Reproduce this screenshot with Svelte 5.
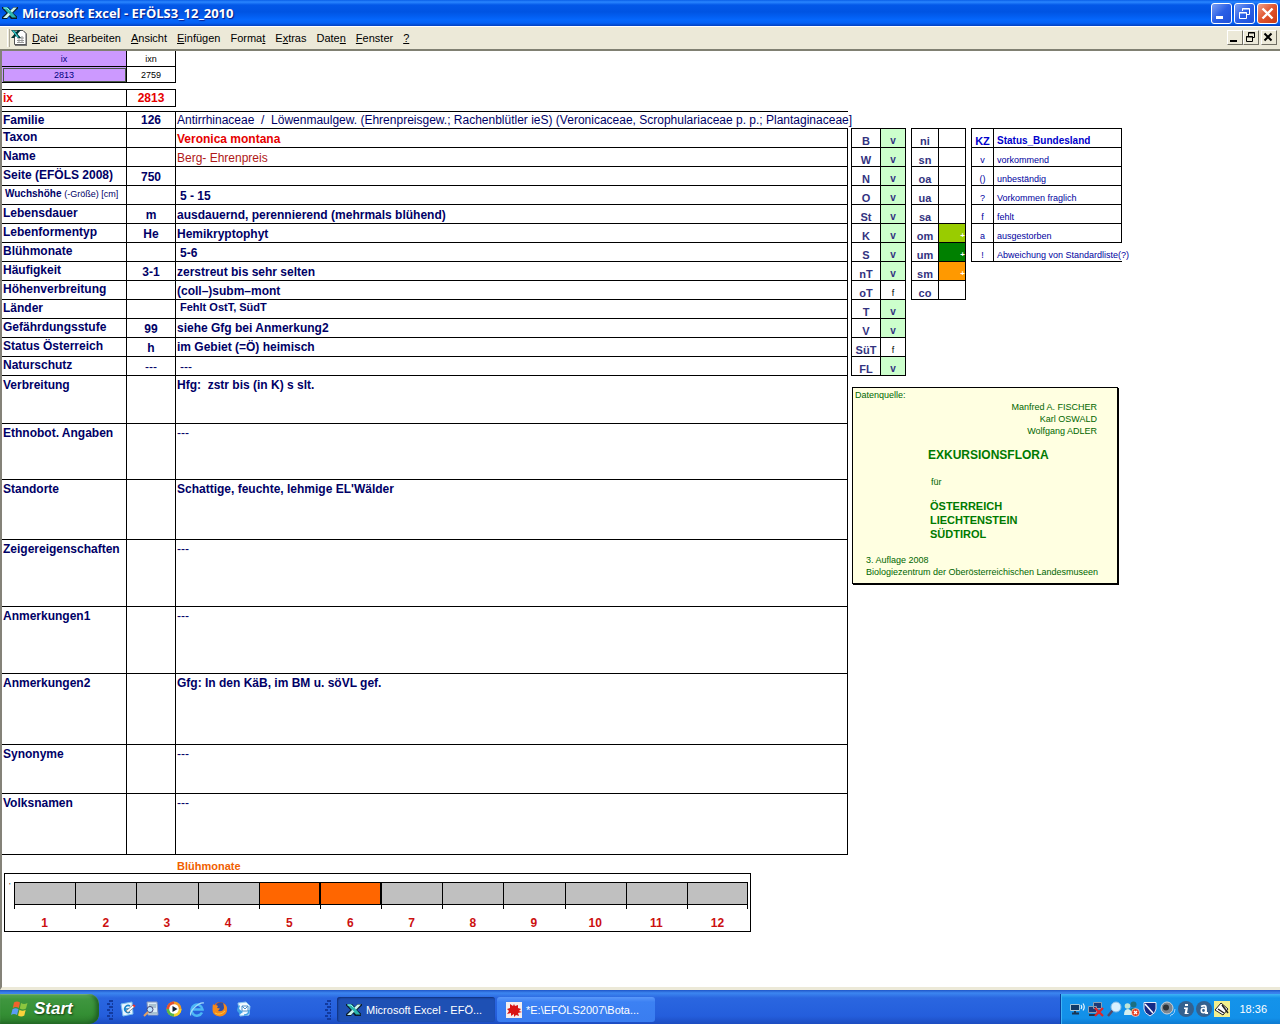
<script>
  const menu = [
    ['', 'D', 'atei'],
    ['', 'B', 'earbeiten'],
    ['', 'A', 'nsicht'],
    ['', 'E', 'infügen'],
    ['Forma', 't', ''],
    ['E', 'x', 'tras'],
    ['Date', 'n', ''],
    ['', 'F', 'enster'],
    ['', '?', '']
  ];

  const shortRows = [
    { label: 'Taxon', code: '', value: 'Veronica montana', kind: 'red' },
    { label: 'Name', code: '', value: 'Berg- Ehrenpreis', kind: 'name' },
    { label: 'Seite (EFÖLS 2008)', code: '750', value: '' },
    { label: 'Wuchshöhe', note: '(-Größe) [cm]', code: '', value: '5 - 15', kind: 'indent' },
    { label: 'Lebensdauer', code: 'm', value: 'ausdauernd, perennierend (mehrmals blühend)' },
    { label: 'Lebenformentyp', code: 'He', value: 'Hemikryptophyt' },
    { label: 'Blühmonate', code: '', value: '5-6', kind: 'indent' },
    { label: 'Häufigkeit', code: '3-1', value: 'zerstreut bis sehr selten' },
    { label: 'Höhenverbreitung', code: '', value: '(coll–)subm–mont' },
    { label: 'Länder', code: '', value: 'Fehlt OstT, SüdT', kind: 'small' },
    { label: 'Gefährdungsstufe', code: '99', value: 'siehe Gfg bei Anmerkung2', kind: 'middle' },
    { label: 'Status Österreich', code: 'h', value: 'im Gebiet (=Ö) heimisch', kind: 'middle' },
    { label: 'Naturschutz', code: '---', value: '---', kind: 'indent' }
  ];

  const longRows = [
    { label: 'Verbreitung', value: 'Hfg:  zstr bis (in K) s slt.', height: 48 },
    { label: 'Ethnobot. Angaben', value: '---', height: 56 },
    { label: 'Standorte', value: "Schattige, feuchte, lehmige EL'Wälder", height: 60 },
    { label: 'Zeigereigenschaften', value: '---', height: 67 },
    { label: 'Anmerkungen1', value: '---', height: 67 },
    { label: 'Anmerkungen2', value: 'Gfg: In den KäB, im BM u. söVL gef.', height: 71 },
    { label: 'Synonyme', value: '---', height: 49 },
    { label: 'Volksnamen', value: '---', height: 61 }
  ];

  const regions = [
    ['B', 'v'], ['W', 'v'], ['N', 'v'], ['O', 'v'], ['St', 'v'], ['K', 'v'], ['S', 'v'],
    ['nT', 'v'], ['oT', 'f'], ['T', 'v'], ['V', 'v'], ['SüT', 'f'], ['FL', 'v']
  ];

  const levels = [
    ['ni', ''], ['sn', ''], ['oa', ''], ['ua', ''], ['sa', ''],
    ['om', 'lime'], ['um', 'green'], ['sm', 'orange'], ['co', '']
  ];

  const legend = [
    ['v', 'vorkommend'], ['()', 'unbeständig'], ['?', 'Vorkommen fraglich'],
    ['f', 'fehlt'], ['a', 'ausgestorben'], ['!', 'Abweichung von Standardliste(?)']
  ];

  const months = [1, 2, 3, 4, 5, 6, 7, 8, 9, 10, 11, 12];
  const flowering = [5, 6];
</script>

{#snippet excelIcon()}
  <svg class="ico" viewBox="0 0 16 16" aria-hidden="true">
    <path d="M0 2h6l3 3 2.500-3H16v1.500L11 8l4 3.500V14H9L7 11.500 5 14H0v-2l4.500-4L0 3.500z" fill="#0b1c2c" />
    <path d="M1 2.500h4.500l9 10H10z" fill="#2bb5ad" />
    <path d="M15 2.500L5 13H1L11.500 2.500z" fill="#c9f3ee" />
    <path d="M1 2.500h4.500l5 5.500-2 2z" fill="#2bb5ad" />
    <path d="M1.500 3h3.500l2.500 2.500" fill="none" stroke="#9ff" stroke-width=".9" />
  </svg>
{/snippet}

<div class="desktop">
  <header class="titlebar">
    {@render excelIcon()}
    <h1>Microsoft Excel - EFÖLS3_12_2010</h1>
    <button class="win" aria-label="Minimieren">
      <svg viewBox="0 0 19 19"><path d="M4 12h7v3H4z" fill="#fff" /></svg>
    </button>
    <button class="win" aria-label="Wiederherstellen">
      <svg viewBox="0 0 19 19" fill="none" stroke="#fff"><path d="M7.500 7V4.500h7v6H12M7 5h8M4.500 8.500h7v6h-7zM4 9h8" /></svg>
    </button>
    <button class="win close" aria-label="Schließen">
      <svg viewBox="0 0 19 19" stroke="#fff" stroke-width="2.400"><path d="M4.500 4.500l10 10M14.500 4.500l-10 10" /></svg>
    </button>
  </header>

  <nav class="menubar">
    <span class="grip"></span>
    <svg class="book" viewBox="0 0 17 17" aria-hidden="true">
      <path d="M4 2h9l3 3v12H4z" fill="#777" />
      <path d="M3.500 1.500h8.500l3 3v11H3.500z" fill="#fff" stroke="#555" />
      <path d="M6 9h7M6 11.500h7M6 13.500h7M8 7v7M11 7v7" stroke="#999" />
      <path d="M0 1h3l2 2 2-2h3L6.500 5 10 9H7L5 7 3 9H0l3.500-4z" fill="#033" />
      <path d="M1 1.500h2l5 7H6.500z" fill="#3cc" />
    </svg>
    {#each menu as [before, key, after]}
      <button class="item">{before}<u>{key}</u>{after}</button>
    {/each}
    <span class="spacer"></span>
    <button class="mini" aria-label="Mappe minimieren">
      <svg viewBox="0 0 13 13"><path d="M2 9h7v2H2z" /></svg>
    </button>
    <button class="mini" aria-label="Mappe wiederherstellen">
      <svg viewBox="0 0 13 13" fill="none" stroke="#000"><path d="M4.500 5V1.500h6v5H8M4 2h7M2.500 5.500h6v5h-6zM2 6h7" /></svg>
    </button>
    <button class="mini last" aria-label="Mappe schließen">
      <svg viewBox="0 0 13 13" stroke="#000" stroke-width="2"><path d="M2.500 2.500l7 7M9.500 2.500l-7 7" /></svg>
    </button>
  </nav>

  <main class="sheet">
    <section class="left">
      <table class="keys">
        <tbody>
          <tr><td class="lilac">ix</td><td>ixn</td></tr>
          <tr><td class="lilac selected">2813</td><td>2759</td></tr>
        </tbody>
      </table>
      <table class="current">
        <tbody><tr><th scope="row">ix</th><td>2813</td></tr></tbody>
      </table>
      <table class="record">
        <colgroup><col class="c1" /><col class="c2" /><col /></colgroup>
        <tbody>
          <tr class="family">
            <th scope="row">Familie</th>
            <td class="code">126</td>
            <td class="value">Antirrhinaceae&nbsp; /&nbsp; Löwenmaulgew. (Ehrenpreisgew.; Rachenblütler ieS) (Veronicaceae, Scrophulariaceae p. p.; Plantaginaceae]</td>
          </tr>
          {#each shortRows as row}
            <tr class="short">
              <th scope="row" class:tiny={row.note}>{row.label}{#if row.note}&nbsp;<span>{row.note}</span>{/if}</th>
              <td class="code" class:light={row.code === '---'}>{row.code}</td>
              <td class="value {row.kind ?? ''}" class:light={row.value === '---'}>{row.value}</td>
            </tr>
          {/each}
          {#each longRows as row}
            <tr class="long" style:height="{row.height}px">
              <th scope="row">{row.label}</th>
              <td class="code"></td>
              <td class="value" class:light={row.value === '---'}>{row.value}</td>
            </tr>
          {/each}
        </tbody>
      </table>

      <h2>Blühmonate</h2>
      <div class="chart">
        <span class="axis">'</span>
        {#each months as m}
          <div class="month">
            <div class="bar" class:on={flowering.includes(m)}></div>
            <div class="tick"></div>
            <span>{m}</span>
          </div>
        {/each}
      </div>
    </section>

    <aside class="right">
      <div class="lists">
        <table class="grid regions">
          <tbody>
            {#each regions as [name, state]}
              <tr><th scope="row">{name}</th><td class:present={state === 'v'}>{state}</td></tr>
            {/each}
          </tbody>
        </table>
        <table class="grid levels">
          <tbody>
            {#each levels as [name, tone]}
              <tr><th scope="row">{name}</th><td class={tone}>{tone ? '+' : ''}</td></tr>
            {/each}
          </tbody>
        </table>
        <table class="grid legend">
          <thead><tr><th>KZ</th><th>Status_Bundesland</th></tr></thead>
          <tbody>
            {#each legend as [key, text]}
              <tr><td>{key}</td><td>{text}</td></tr>
            {/each}
          </tbody>
        </table>
      </div>

      <div class="card">
        <p>Datenquelle:</p>
        <p class="authors">Manfred A. FISCHER<br />Karl OSWALD<br />Wolfgang ADLER</p>
        <p class="title">EXKURSIONSFLORA</p>
        <p class="for">für</p>
        <p class="places">ÖSTERREICH<br />LIECHTENSTEIN<br />SÜDTIROL</p>
        <p class="edition">3. Auflage 2008<br />Biologiezentrum der Oberösterreichischen Landesmuseen</p>
      </div>
    </aside>
  </main>

  <footer class="taskbar">
    <button class="start">
      <svg viewBox="0 0 20 20" aria-hidden="true">
        <path d="M4 3.500q3-2 6 0L8.800 9q-3-2-6 0z" fill="#f0622d" />
        <path d="M11 4q3 2 6.500 0L16 9.500q-3 2-6.200 0z" fill="#8cc63f" />
        <path d="M2.500 10.200q3-2 6 0L7 16q-3-2-6 0z" fill="#5b9cf5" />
        <path d="M9.500 10.700q3 2 6.200 0L14.300 16.500q-3 2-6.300 0z" fill="#fbd23c" />
      </svg>
      Start
    </button>
    <span class="dots"></span>
    <div class="quick">
      <button aria-label="Desktop anzeigen">
        <svg viewBox="0 0 16 16"><path d="M1 3l11-2 1 12-10 2z" fill="#e8f5ff" stroke="#7cc0ee" /><path d="M10 5a3.500 3.500 0 1 0 0 6M5 8h5" fill="none" stroke="#1a86cc" stroke-width="1.500" /><path d="M6 10l7-6 2 1.500-7 6z" fill="#fff" stroke="#555" stroke-width=".6" /><path d="M13 4l2 1.500" stroke="#e33" stroke-width="2" /></svg>
      </button>
      <button aria-label="Suche">
        <svg viewBox="0 0 16 16"><path d="M4 1h10l1 13H5z" fill="#dcebf7" stroke="#89b" /><path d="M6 4h7M6 6h7M6 12h8" stroke="#79a" /><circle cx="7" cy="8.500" r="3" fill="#bfe4ff" stroke="#447" /><path d="M5 11l-4 4" stroke="#e4a060" stroke-width="2" /></svg>
      </button>
      <button aria-label="Media Player">
        <svg viewBox="0 0 16 16"><circle cx="8" cy="8" r="7.500" fill="#f29b26" /><path d="M8 .5A7.500 7.500 0 0 0 .5 8H8z" fill="#e4502f" /><path d="M.5 8A7.500 7.500 0 0 0 8 15.500V8z" fill="#57b947" /><path d="M8 15.500A7.500 7.500 0 0 0 15.500 8H8z" fill="#f3d02c" /><circle cx="8" cy="8" r="4.800" fill="#fff" /><path d="M6.500 5l5 3-5 3z" fill="#123" /></svg>
      </button>
      <button aria-label="Internet Explorer">
        <svg viewBox="0 0 16 16" fill="none"><path d="M13 11.500A5.500 5.500 0 1 1 13.500 8.500H4" stroke="#4db8f5" stroke-width="2.500" /><path d="M2 14.500C-1 12 9 1 15 2" stroke="#a6dcfb" stroke-width="1.200" /></svg>
      </button>
      <button aria-label="Firefox">
        <svg viewBox="0 0 16 16"><circle cx="8" cy="8" r="7" fill="#e86b14" /><circle cx="8.500" cy="6" r="4.800" fill="#2d4fa8" /><path d="M1 3q1.500 2 3 1l2 1-1 2 3 .5-2 2.500q5 1 6-3 0-3-1-5 4 2 4 6 0 7-7 7.500Q0 15 .5 8 .5 5 1 3z" fill="#f58a1b" /><path d="M3 12q5 3 10-2" fill="none" stroke="#ffc93c" /></svg>
      </button>
      <button aria-label="Outlook Express">
        <svg viewBox="0 0 16 16"><path d="M3 2l8-1 4 4-1 9-9 1z" fill="#eef8ff" stroke="#8cc4ee" /><path d="M7 5h6v5H7z" fill="#fff" stroke="#4a90cc" /><path d="M7 5l3 3 3-3" fill="none" stroke="#4a90cc" /><path d="M4 4Q0 9 4 12v2l4-3-4-3v2Q3 8 5 5z" fill="#3f9fe6" /><path d="M9 14q5 0 5-5" fill="none" stroke="#3f9fe6" stroke-width="1.500" /></svg>
      </button>
    </div>
    <span class="dots"></span>
    <button class="task active">{@render excelIcon()}<span>Microsoft Excel - EFÖ...</span></button>
    <button class="task">
      <svg class="ico" viewBox="0 0 16 16" aria-hidden="true"><path d="M0 0h16v16H0z" fill="#f4eeee" /><path d="M4 2l3 2 1-2 1 2 3-1v3l3 1-2 2 3 1-4 1 1 3-3-1-2 2v-3l-3 2v-3l-4 1 2-3-2-2 3-1z" fill="#d81414" /></svg>
      <span>*E:\EFÖLS2007\Bota...</span>
    </button>
    <span class="spacer"></span>
    <div class="tray">
      <svg viewBox="0 0 16 16"><path d="M.5 3.500h9v6h-9z" fill="#123a66" stroke="#a8c8d8" /><path d="M2 12.500h7M5 10v2" stroke="#1c3550" stroke-width="2" /><path d="M11 4q1.500 2 0 4M13 2.500q2.500 3.500 0 7" fill="none" stroke="#e7f6ff" stroke-width="1.200" /></svg>
      <svg viewBox="0 0 16 16"><path d="M5.500 1.500h8v6h-8zM.5 5.500h8v6h-8z" fill="#1a3a78" stroke="#8aa0b4" /><path d="M1 14h7" stroke="#1c3550" stroke-width="2" /><path d="M7 7l8 8M15 7l-8 8" stroke="#e32626" stroke-width="2.200" /></svg>
      <svg viewBox="0 0 16 16"><path d="M7 9l-5 6" stroke="#54496a" stroke-width="2.500" /><circle cx="10" cy="6" r="5" fill="#d8f1ff" stroke="#86bde8" /></svg>
      <svg viewBox="0 0 16 16"><circle cx="9.500" cy="3.500" r="3" fill="#1c6f80" /><circle cx="3.500" cy="5" r="2.800" fill="#bfe5d8" /><path d="M5 12q0-5 5-5 5 0 5 5z" fill="#1f7a6e" /><path d="M0 14q0-6 4-6 4 1 5 6z" fill="#d6f0ef" /><circle cx="11.500" cy="11.500" r="4" fill="#e23d1f" stroke="#fff" stroke-width=".6" /><path d="M10 10l3 3M13 10l-3 3" stroke="#fff" stroke-width="1.300" /></svg>
      <svg viewBox="0 0 16 16"><path d="M2 1.500h12V8q0 4-6 7-6-3-6-7z" fill="#142a86" stroke="#e6ecf8" /><path d="M3 3l8 9" stroke="#fff" stroke-width="1.500" /></svg>
      <svg viewBox="0 0 16 16"><circle cx="7" cy="7" r="6" fill="#7c8690" stroke="#cdd4da" /><circle cx="6" cy="6.500" r="3" fill="#2c3238" /><path d="M12 14q3-2 3-6M10 15q1 0 2-2" fill="none" stroke="#9ed2ff" /></svg>
      <svg viewBox="0 0 16 16"><circle cx="8" cy="8" r="8" fill="#34618f" /><path d="M7 3h3v2H7zM6 6.500h4L9 12h1.500v1H6.500l1-5H6z" fill="#fff" /></svg>
      <svg viewBox="0 0 16 16"><circle cx="8" cy="8" r="8" fill="#34618f" /><circle cx="7.500" cy="9.500" r="2.200" fill="none" stroke="#fff" stroke-width="1.600" /><path d="M5 5.500q5-2.500 5 1.500v5h2" fill="none" stroke="#fff" stroke-width="1.800" /></svg>
      <svg viewBox="0 0 16 16"><path d="M0 0h16v16H0z" fill="#f3ef8e" /><path d="M1 9l6-7 7 6-5 6z" fill="#fff" stroke="#222" /><path d="M4 8l6 4M8 4l6 8" stroke="#222" stroke-width="1.500" /></svg>
      <time>18:36</time>
    </div>
  </footer>
</div>

<style>
  :global(body) { margin: 0; background: #fff; }
  * { box-sizing: border-box; }
  button { font: inherit; color: inherit; border: 0; padding: 0; margin: 0; background: none; }
  svg { display: block; flex: none; }
  p, h1, h2 { margin: 0; }
  .desktop {
    min-height: 100vh;
    display: flex;
    flex-direction: column;
    font-family: "Liberation Sans", Arial, sans-serif;
    font-size: 11px;
  }
  .spacer { flex: 1; }
  .ico { width: 16px; height: 16px; }

  .titlebar {
    height: 26px;
    display: flex;
    align-items: center;
    gap: 2px;
    padding: 0 2px;
    color: #fff;
    background: linear-gradient(#0a5fe8 0, #2a86ff 2px, #0358e8 5px, #0054e3 12px, #0567fd 20px, #0461f5 23px, #0240c0 26px);
  }
  .titlebar h1 {
    flex: 1;
    padding-left: 2px;
    font: bold 13px/20px "Open Sans", "Noto Sans", sans-serif;
    text-shadow: 1px 1px 1px #0a1883;
  }
  .win {
    width: 21px;
    height: 21px;
    border: 1px solid #fff;
    border-radius: 3px;
    background: linear-gradient(135deg, #7c9ff3, #2a5fe6 50%, #1f50d8);
  }
  .win.close { background: linear-gradient(135deg, #f0a088, #e0532c 50%, #c83a14); }

  .menubar {
    height: 25px;
    display: flex;
    align-items: center;
    padding: 0 3px 1px 7px;
    background: #ece9d8;
    border-top: 1px solid #fff;
    border-bottom: 2px solid #808072;
  }
  .grip { width: 3px; height: 18px; border-left: 1px solid #fff; border-right: 1px solid #aca899; }
  .book { width: 17px; height: 17px; margin: 0 0 1px 1px; }
  .item { padding: 0 5px; line-height: 16px; }
  .book + .item { padding-left: 4px; }
  .mini {
    width: 16px;
    height: 15px;
    border: 1px solid;
    border-color: #fff #716f64 #716f64 #fff;
  }
  .mini svg { width: 13px; height: 13px; }
  .mini.last { margin-left: 2px; }

  .sheet {
    flex: 1;
    display: grid;
    grid-template-columns: minmax(0, 846fr) minmax(0, 432fr);
    align-items: start;
    border-left: 2px solid #848278;
    border-bottom: 3px solid #ece9d8;
    color: #000066;
  }
  table { border-collapse: separate; border-spacing: 0; table-layout: fixed; }
  th, td { padding: 0; border: 0 solid #000; border-width: 0 1px 1px 0; white-space: pre; }
  th { text-align: left; }

  .keys { width: 174px; font-size: 9px; line-height: 14px; text-align: center; color: #000; }
  .keys tr { height: 16px; }
  .keys td:first-child { width: 125px; }
  .keys .lilac { background: #cc99ff; color: #000080; }
  .keys .selected { outline: 1px solid #4a5a4a; outline-offset: -2px; }
  .current { width: 174px; margin: 6px 0 4px; font-size: 12px; line-height: 16px; color: #e60000; font-weight: bold; }
  .current th, .current td { border-top-width: 1px; }
  .current th { width: 125px; padding-left: 1px; }
  .current td { text-align: center; }

  .record { width: 100%; border-top: 1px solid #000; font-size: 12px; line-height: 16px; }
  .c1 { width: 125px; }
  .c2 { width: 49px; }
  .record th, .record td { vertical-align: top; padding-left: 1px; }
  .record td { font-weight: bold; }
  .record .code { text-align: center; vertical-align: bottom; padding: 0; }
  .family { height: 17px; }
  .record .family .value { font-weight: normal; border-right: 0; overflow: visible; }
  .short { height: 19px; }
  .short .value { vertical-align: bottom; }
  .long th, .long td { padding-top: 1px; }
  .record .red { color: #e60000; }
  .record .name { color: #b01818; font-weight: normal; }
  .record .indent, .record .small { padding-left: 4px; }
  .record .small { font-size: 11px; line-height: 14px; vertical-align: top; }
  .record .middle { vertical-align: middle; }
  .record .light { font-weight: normal; }
  .record .tiny { font-size: 10px; padding-left: 3px; }
  .tiny span { font-weight: normal; font-size: 9px; }

  h2 { padding: 3px 0 0 175px; font-size: 11px; line-height: 16px; height: 18px; color: #f06000; }
  .chart {
    display: flex;
    margin: 0 97px 0 2px;
    border: 1px solid #000;
    padding: 8px 2px 0 4px;
    height: 59px;
  }
  .axis { width: 5px; font-size: 8px; line-height: 8px; color: #000; }
  .month { flex: 1; text-align: center; color: #cc1010; font-weight: bold; font-size: 12px; line-height: 16px; }
  .bar { height: 23px; background: #c0c0c0; border: 1px solid #000; border-right-width: 0; }
  .month:last-child .bar { border-right-width: 1px; }
  .bar.on { background: #ff6600; border-right-width: 1px; }
  .tick { height: 4px; margin-bottom: 6px; border-left: 1px solid #000; }
  .month:last-child .tick { border-right: 1px solid #000; }

  .right { padding: 77px 0 0 3px; }
  .lists { display: flex; gap: 5px; align-items: flex-start; }
  .grid { flex: none; border: 0 solid #000; border-width: 1px 0 0 1px; line-height: 12px; text-align: center; }
  .grid tr { height: 19px; }
  .grid th, .grid td { vertical-align: bottom; }
  .grid th { text-align: center; font-size: 11px; color: #333380; }
  .regions, .levels { width: 55px; }
  .regions th { width: 29px; }
  .regions td { font-size: 9px; color: #000; }
  .regions .present { background: #ccffcc; color: #333380; font-weight: bold; font-size: 10px; }
  .levels th { width: 27px; }
  .levels td { text-align: right; font-size: 8px; font-weight: bold; color: #fff; }
  .lime { background: #99cc00; }
  .green { background: #008000; }
  .orange { background: #ff9900; }
  .legend { width: 151px; }
  .legend th { color: #0000cc; }
  .legend th:first-child { width: 22px; }
  .legend th:last-child { font-size: 10px; }
  .legend td { font-size: 9px; color: #0000a0; }
  .legend th:last-child, .legend td:last-child { text-align: left; padding-left: 3px; }
  .legend tbody tr:last-child td:last-child { border-right: 0; }

  .card {
    width: 266px;
    margin: 11px 0 0 1px;
    padding: 1px 20px 5px 2px;
    border: 1px solid #000;
    box-shadow: 1px 1px 0 #000;
    background: #ffffe1;
    color: #006600;
    font-size: 9px;
    line-height: 12px;
    white-space: nowrap;
  }
  .authors { text-align: right; }
  .title { margin: 10px 0 0 73px; font-size: 12px; line-height: 16px; font-weight: bold; }
  .for { margin: 13px 0 0 76px; }
  .places { margin: 11px 0 0 75px; font-size: 11px; line-height: 14px; font-weight: bold; }
  .title, .places { color: #007a00; }
  .edition { margin: 13px 0 0 11px; }

  .taskbar {
    height: 34px;
    display: flex;
    align-items: flex-end;
    color: #fff;
    background: linear-gradient(#1f55c8 0, #3c86f0 3px, #2a66e0 8px, #245edc 26px, #1c4cc0 34px);
  }
  .start {
    width: 99px;
    height: 30px;
    display: flex;
    align-items: center;
    gap: 4px;
    padding: 0 0 1px 10px;
    border-radius: 0 10px 10px 0;
    background: linear-gradient(#5faa5f, #3f963f 5px, #348f34 20px, #2b7a2b);
    box-shadow: inset -3px -1px 4px #1f5f24, inset 0 1px 1px #8fc98f;
    font: italic bold 17px/20px "Liberation Sans", sans-serif;
    text-shadow: 1px 1px 2px #123a12;
  }
  .start svg { width: 20px; height: 20px; }
  .dots {
    width: 6px;
    height: 20px;
    margin: 0 0 4px 8px;
    background:
      conic-gradient(from 90deg at 2px 2px, transparent 75%, #123a9e 0) 0 0 / 6px 6px,
      conic-gradient(from 90deg at 2px 2px, transparent 75%, #123a9e 0) 3px 3px / 6px 6px;
  }
  .quick { display: flex; gap: 7px; margin: 0 74px 7px 7px; }
  .quick + .dots { margin-left: 0; }
  .quick svg { width: 16px; height: 16px; }
  .task {
    width: 158px;
    height: 25px;
    display: flex;
    align-items: center;
    gap: 4px;
    margin: 0 2px 2px 0;
    padding: 0 9px;
    border-radius: 3px;
    background: linear-gradient(#5a98fa, #3c81f3 5px, #3a7df0);
    white-space: nowrap;
  }
  .task.active { margin-left: 6px; background: #1e50b4; box-shadow: inset 1px 1px 2px #102f78; }
  .tray {
    height: 30px;
    display: flex;
    align-items: center;
    gap: 2px;
    padding: 0 13px 0 9px;
    border-left: 1px solid #0a3f9e;
    background: linear-gradient(#3fb4f5, #1493ea 4px, #1290e9 24px, #0f7ad0);
    box-shadow: inset 1px 0 0 #3fb4f5;
  }
  .tray svg { width: 16px; height: 16px; }
  time { margin-left: 7px; }
</style>
